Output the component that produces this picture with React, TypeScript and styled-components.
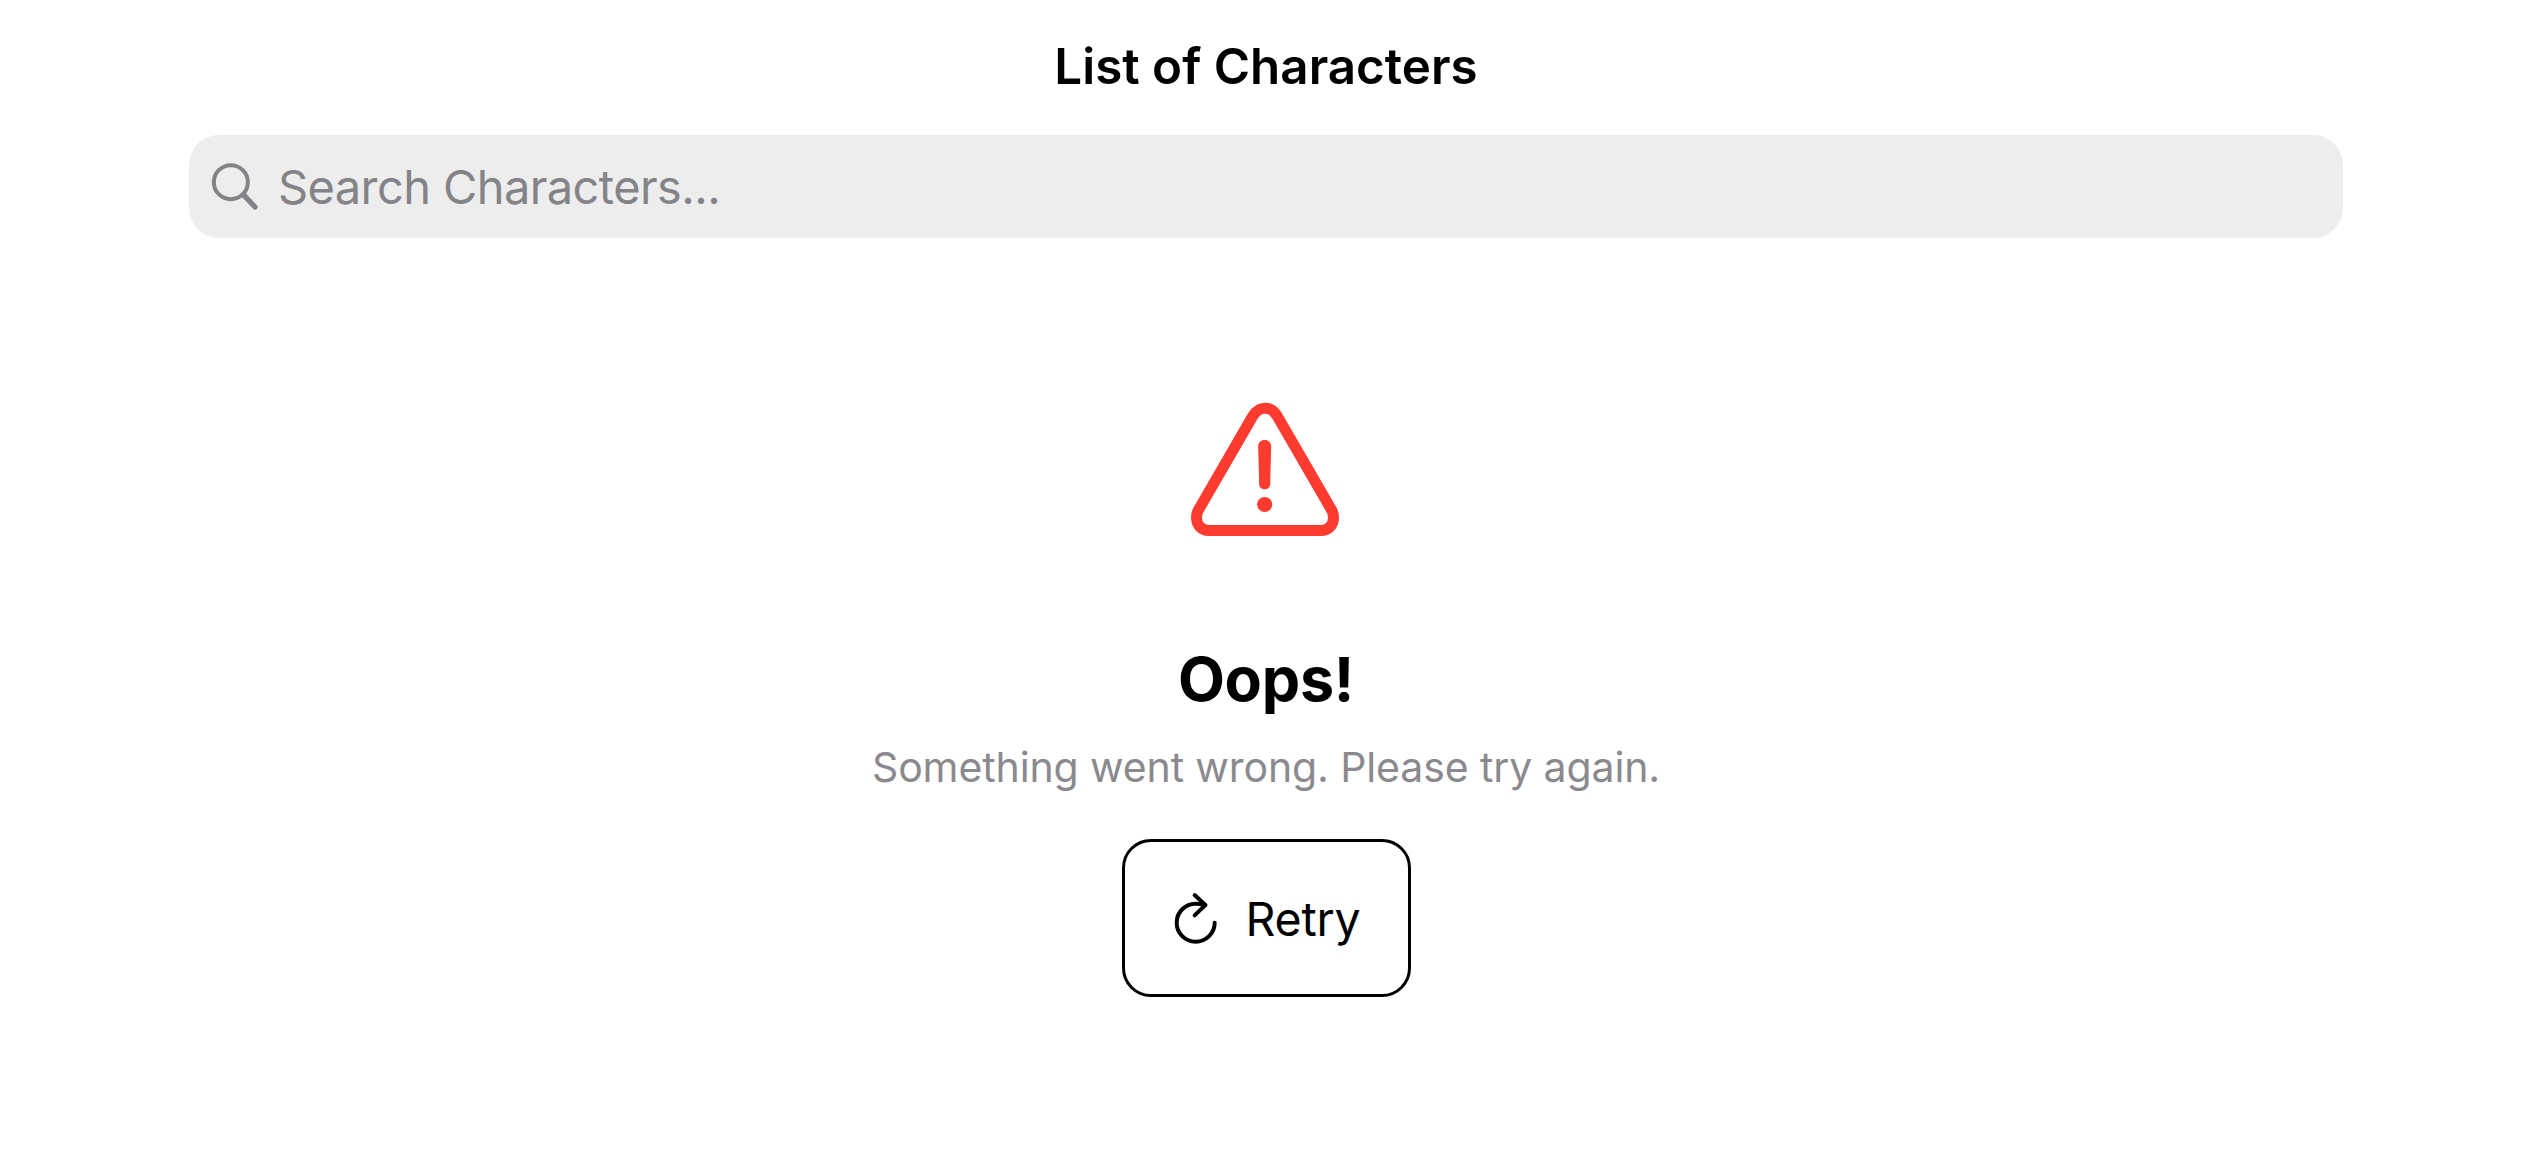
import React from 'react';
import styled, { createGlobalStyle } from 'styled-components';

const GlobalStyle = createGlobalStyle`
  *, *::before, *::after { box-sizing: border-box; }
  body {
    margin: 0;
    background: #fff;
    color: #000;
    font-family: Inter, "Liberation Sans", sans-serif;
  }
`;

const Screen = styled.main`
  display: flex;
  flex-direction: column;
  height: 1170px;
  padding: 0 189px;
  overflow: hidden;
`;

const NavBar = styled.header`
  display: flex;
  justify-content: center;
  height: 135px;
  padding-top: 36px;
`;

const Title = styled.h1`
  margin: 0;
  font-size: 49.3px;
  font-weight: 600;
  line-height: 60px;
  letter-spacing: 0.02px;
`;

const SearchField = styled.label`
  display: flex;
  align-items: center;
  height: 103px;
  padding-left: 22px;
  gap: 20px;
  border-radius: 30px;
  background: #ededed;
  color: #848488;
`;

const SearchInput = styled.input`
  flex: 1;
  height: 60px;
  padding: 0;
  border: 0;
  outline: 0;
  background: transparent;
  font: 400 47px/60px Inter, "Liberation Sans", sans-serif;
  letter-spacing: -0.6px;
  &::placeholder {
    color: #848488;
    opacity: 1;
  }
`;

const ErrorState = styled.section`
  display: flex;
  flex-direction: column;
  align-items: center;
`;

const Heading = styled.h2`
  margin: 101px 0 0;
  font-size: 61px;
  font-weight: 700;
  line-height: 80px;
  letter-spacing: -0.3px;
`;

const Message = styled.p`
  margin: 21px 0 0;
  font-size: 41px;
  line-height: 54px;
  letter-spacing: -0.11px;
  color: #8a8a8e;
`;

const RetryButton = styled.button`
  display: flex;
  align-items: center;
  width: 289px;
  height: 158px;
  margin-top: 45px;
  padding: 0 0 0 48px;
  gap: 28px;
  border: 3px solid #000;
  border-radius: 29px;
  background: #fff;
  color: #000;
  font: 400 46.5px/60px Inter, "Liberation Sans", sans-serif;
  letter-spacing: -0.2px;
`;

const RetryLabel = styled.span`
  padding-top: 2px;
`;

const Glyph = styled.svg<{ $top?: number }>`
  display: block;
  flex: none;
  margin-top: ${({ $top = 0 }) => $top}px;
  fill: none;
  stroke: currentColor;
  stroke-linecap: round;
  stroke-linejoin: round;
`;

const WarningGlyph = styled(Glyph)`
  color: #ff3b30;
`;

const SearchIcon = () => (
  <Glyph width="47" height="47" viewBox="0 0 141 141">
    <circle cx="59.5" cy="57.5" r="51" strokeWidth="12" />
    <path d="M97 95L132 132" strokeWidth="16" />
  </Glyph>
);

const WarningIcon = () => (
  <WarningGlyph $top={164} width="150" height="136" viewBox="0 -1 450 408">
    <path
      d="M185 42C204 9.5 240 9.5 259 42L423 325C426 331 427.5 339 427.5 346C427.5 368 412 384.5 390 384.5H54C32 384.5 16.5 368 16.5 346C16.5 339 18 331 21 325Z"
      strokeWidth="33"
    />
    <path
      d="M201.5 132C201.5 121 210 113 221 113S240.5 121 240.5 132L237.5 246C237.5 255 230 261 221 261S204.5 255 204.5 246Z"
      fill="currentColor"
      stroke="none"
    />
    <circle cx="221" cy="306.5" r="22.7" fill="currentColor" stroke="none" />
  </WarningGlyph>
);

const RetryIcon = () => (
  <Glyph width="45" height="53" viewBox="0 0 135 159">
    <path d="M125 92A57 57 0 1 1 68 35Q83 35 97 39" strokeWidth="12" />
    <path d="M65 9L97 39L65 70" strokeWidth="12" />
  </Glyph>
);

export default function App() {
  return (
    <>
      <GlobalStyle />
      <Screen>
        <NavBar>
          <Title>List of Characters</Title>
        </NavBar>
        <SearchField>
          <SearchIcon />
          <SearchInput type="search" placeholder="Search Characters..." />
        </SearchField>
        <ErrorState>
          <WarningIcon />
          <Heading>Oops!</Heading>
          <Message>Something went wrong. Please try again.</Message>
          <RetryButton type="button">
            <RetryIcon />
            <RetryLabel>Retry</RetryLabel>
          </RetryButton>
        </ErrorState>
      </Screen>
    </>
  );
}
